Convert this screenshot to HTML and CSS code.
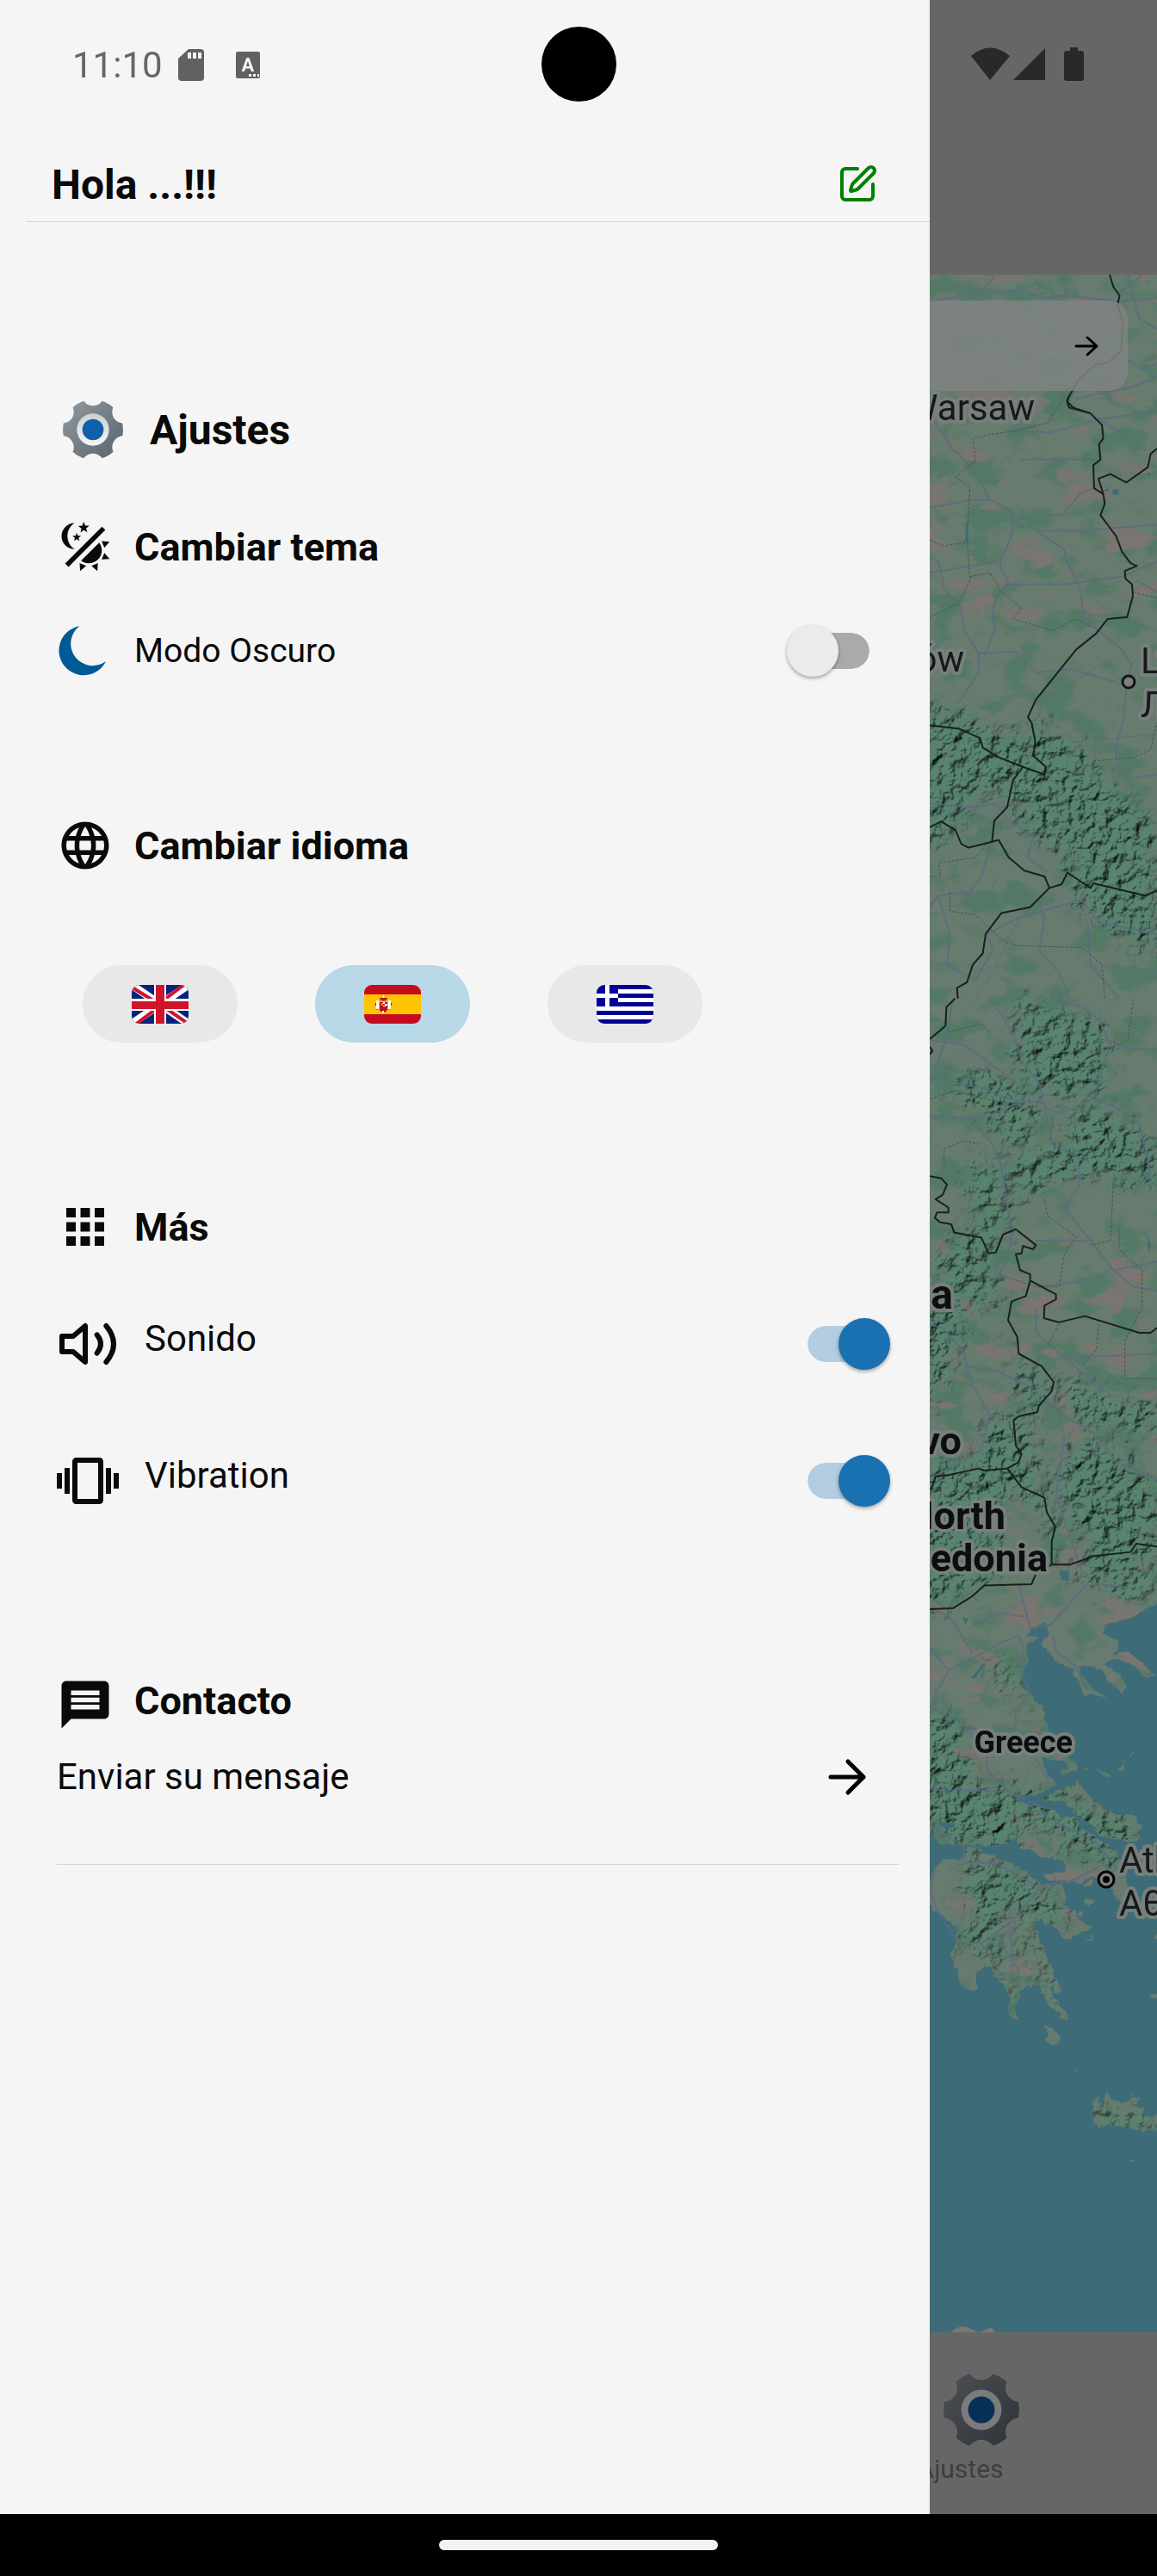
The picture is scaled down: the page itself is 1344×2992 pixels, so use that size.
FILE: index.html
```html
<!DOCTYPE html>
<html lang="es">
<head>
<meta charset="utf-8">
<meta name="viewport" content="width=device-width, initial-scale=1">
<title>Ajustes</title>
<link rel="stylesheet" href="styles.css">
</head>
<body>
<div class="device">
  <div class="screen">
    <div class="app">
      <header class="app-header"></header>
      <div class="map">
        <svg class="map-canvas" viewBox="0 319 1344 2390" preserveAspectRatio="xMaxYMin slice" aria-hidden="true">
          <defs>
            <filter id="forest" x="0" y="0" width="1" height="1" color-interpolation-filters="sRGB">
              <feTurbulence type="fractalNoise" baseFrequency=".024 .034" numOctaves="4" seed="7"/>
              <feColorMatrix values="0 0 0 0 .325  0 0 0 0 .475  0 0 0 0 .400  7 0 0 0 -3.6"/>
              <feComposite in2="SourceAlpha" operator="in"/>
            </filter>
            <filter id="plains" x="0" y="0" width="1" height="1" color-interpolation-filters="sRGB">
              <feTurbulence type="fractalNoise" baseFrequency=".018 .036" numOctaves="4" seed="23"/>
              <feColorMatrix values="0 0 0 0 .482  0 0 0 0 .459  0 0 0 0 .443  0 10 0 0 -6"/>
              <feComposite in2="SourceAlpha" operator="in"/>
            </filter>
            <filter id="relief" x="-.1" y="-.1" width="1.2" height="1.2" color-interpolation-filters="sRGB">
              <feGaussianBlur in="SourceGraphic" stdDeviation="9" result="soft"/>
              <feTurbulence type="fractalNoise" baseFrequency=".07" numOctaves="4" seed="4" result="noise"/>
              <feDisplacementMap in="soft" in2="noise" scale="50" xChannelSelector="R" yChannelSelector="G" result="area"/>
              <feColorMatrix in="noise" values="0 0 0 0 0 0 0 0 0 0 0 0 0 0 0 1 0 0 0 0" result="height"/>
              <feDiffuseLighting in="height" surfaceScale="6" diffuseConstant="1.25" lighting-color="#fff" result="light">
                <feDistantLight azimuth="225" elevation="55"/>
              </feDiffuseLighting>
              <feComposite in="area" in2="light" operator="arithmetic" k1="1" k2="0" k3="0" k4="0"/>
            </filter>
            <filter id="rough" x="-.1" y="-.1" width="1.2" height="1.2" color-interpolation-filters="sRGB">
              <feTurbulence type="fractalNoise" baseFrequency=".12" numOctaves="2" seed="2" result="n"/>
              <feDisplacementMap in="SourceGraphic" in2="n" scale="9" xChannelSelector="R" yChannelSelector="G"/>
            </filter>
            <path id="land" d="M0-3700H830V-91L740-50 640-29 640-5 685 10 690 30 665 50 720 40 760 65 812 100 800 112 765 95 735 75 700 65 670 55 640 75 690 100 718 135 700 150 665 125 630 95 600 78 545 80 600 140 648 163 600 155 560 148 545 115 520 85 470 65 430 30 425 15 450-10 430-35 385-20 372 0 410 5 365 25 372 60 350 100 355 130 385 155 420 190 445 245 460 290 510 315 540 330 545 350 490 362 480 355 520 345 500 325 420 318 430 345 445 365 470 385 440 400 400 415 345 415 330 425 380 440 470 455 480 475 540 475 545 495 600 520 640 540 680 560 700 600 720 640 715 680 700 700 680 680 650 640 600 625 560 640 520 640 440 635 430 620 500 615 510 595 470 580 420 575 380 555 345 555 330 530 270 545 200 545 60 540 30 505 0 500Z
              M0 640 30 635 50 600 80 585 140 580 155 555 190 550 240 575 300 590 370 615 420 650 495 650 505 680 500 705 535 715 545 735 590 755 580 770 540 775 520 795 490 785 480 765 430 745 395 735 400 765 430 820 450 860 485 920 470 930 440 910 455 930 490 970 513 997 490 995 460 970 430 945 415 910 370 912 345 925 340 945 325 960 335 997 305 988 300 975 310 950 300 920 270 895 245 885 250 865 215 860 190 880 198 920 180 928 135 905 130 880 105 845 105 820 130 800 125 760 90 735 40 710 0 690Z
              M425 420 470 405 550 380 575 410 620 440 680 465 750 468 765 500 760 535 700 530 620 520 600 495 540 465 500 430 425 428Z
              M600 1215 612 1195 618 1215 640 1215 648 1178 657 1210 720 1212 740 1193 762 1205 740 1225 775 1230 780 1250 830 1250 830 1288 740 1285 680 1275 610 1272 598 1262Z
              M440 1015 460 1025 485 1040 475 1065 455 1065 437 1048Z M570 685 602 685 585 706Z M565 650 598 630 598 640 580 656Z M545 722 565 718 555 732Z M565 790 602 782 590 792Z M725 1363 747 1368 740 1375Z M532 1128 545 1132 540 1138Z M615 345 658 362 635 366Z M680 348 708 324 700 345Z M565 345 585 345 575 352Z M728 308 738 304 732 314Z M798 935 830 930 830 948 800 946Z M810 790 830 755 830 795Z"/>
            <clipPath id="land-clip"><use href="#land" transform="translate(1070 1900) scale(.3333 .4464)"/></clipPath>
          </defs>
          <rect class="sea" y="319" width="1344" height="2390"/>
          <g filter="url(#rough)"><use class="land" href="#land" transform="translate(1070 1900) scale(.3333 .4464)"/></g>
          <g clip-path="url(#land-clip)">
            <rect x="1080" y="319" width="264" height="2100" filter="url(#forest)"/>
            <rect x="1080" y="319" width="264" height="400" filter="url(#plains)"/>
            <rect x="1080" y="1440" width="264" height="980" filter="url(#plains)"/>
            <g filter="url(#relief)" class="hills">
              <g transform="translate(1070 460) scale(.3333 .4464)">
                <path d="M0 820 150 830 350 900 400 840 560 920 620 990 822 1110V1440L700 1420 540 1310 520 1200 340 1110 290 1030 200 1040 60 1170 0 1180Z"/>
              </g>
              <g transform="translate(1070 1160) scale(.3333 .485)">
                <path d="M340 0 640 60 650 200 500 250 350 190 330 80ZM120 170 330 200 400 260 380 340 240 340 280 300 120 230ZM520 290 600 250 770 320 780 370 830 330V440L470 420 320 510 300 380 480 360ZM150 400 270 390 290 520 310 550 250 600 150 550 60 620 80 720 0 740V1000L120 870 160 700 280 760 300 860 460 920 560 910 640 960 830 960V1040L560 1010 470 930 400 990 240 1000 200 1100 0 1120V1480L170 1410 300 1380 240 1250 330 1160 460 1290 460 1350 540 1360 620 1300 500 1260 480 1140 560 1040 700 1100 830 1180V1330L620 1400 820 1360V1440L700 1430 500 1370Z"/>
              </g>
              <g transform="translate(1070 1900) scale(.3333 .4464)">
                <path d="M0 200 110 200 190 390 400 400 760 490 700 600 540 560 330 460 360 560 60 540 0 440ZM210 50 360 120 340 150 250 110ZM360 170 430 240 360 200ZM500 390 620 470 750 500 700 530 600 470ZM130 580 250 580 420 660 570 760 400 730 360 760 470 900 500 990 380 850 330 780 350 680 260 760 330 990 210 800 110 830 200 720ZM600 1220 830 1250V1290L610 1270Z"/>
              </g>
            </g>
          </g>
          <g class="roads">
            <g transform="translate(880 0) scale(.3333)">
              <path d="M822 955C820 1000 770 1000 778 1035L795 1080M600 1050 780 1020 920 1010 1000 1040 1075 1030 1260 1050 1400 1038M1062 955 1075 1030M1250 1030 1340 960M1290 950 1330 1110 1400 1150M1290 1255 1340 1290 1400 1260M1110 1390 1200 1370 1300 1350 1400 1310"/>
            </g>
            <g transform="translate(1070 460) scale(.3333 .4464)">
              <path d="M30 60C100 100 80 130 130 150L200 210 240 270 310 295 320 320 370 320 380 340 500 400 505 430 550 490 570 580 700 660 735 700 718 740 705 840 680 910 685 980 720 995 822 985M320 320C320 400 260 420 280 450L305 485C240 540 250 560 250 580L260 600 220 680M30 420 60 430 80 500 140 550 150 610 200 670 330 665 400 720 520 710 680 745M200 670 200 720 130 800M340 165 620 165M320 90 450 95 620 60 822 40M620 60 780 140M240 270 180 270 30 290M400 350 560 350 822 335M440 310 490 310 560 250 600 240M30 460 270 430M300 490 500 490 700 470 822 430M750 480 822 510M30 1060 180 1070 260 1060 300 1100 390 1150 370 1200 440 1240M250 1140 210 1250 170 1290 60 1300 30 1330M60 1300 100 1400 90 1480 190 1520 250 1440 230 1400 330 1360 560 1310 620 1370 822 1400M410 1310 430 1360 410 1440 480 1500 520 1568M580 1370 590 1480 690 1568"/>
              <path class="thin" d="M30 150 110 230 180 210M130 800 30 770M390 800 520 750 640 690M440 860 600 790M520 900 680 890 822 880M30 1470 90 1480M100 830 110 900 70 960 40 1040M270 1250 240 1290 130 1300M480 1010 470 1100 400 1150M340 1360 250 1500 190 1568M620 1480 822 1500"/>
            </g>
            <g transform="translate(1070 1160) scale(.3333 .485)">
              <path d="M240 0C300 60 320 70 350 150L410 200 430 260 480 275 600 240 640 150 660 110 620 50 560 20 450 0M600 240 680 260 760 300 790 380 800 440M660 100 720 120 822 122M110 0 90 90 40 190 30 200M30 100 150 110 330 200M40 190 220 215 300 240 430 250M30 280 200 290 340 250M180 290 250 350 280 400 300 500 320 560M430 260 460 350 550 380 550 450 500 500 590 580 670 650 822 630M400 580 600 580M320 560 290 640 240 690M270 660 400 690 530 680 620 660M670 650 740 690 822 700M30 780 80 790 150 850 170 910 240 1000 210 1080 30 1150M150 880 260 890 380 930 500 1000 600 1040 680 1110 822 1150M500 1050 470 1190 560 1370 600 1400 720 1410M400 740 400 800 500 860 640 940M500 860 822 850M30 1460 100 1480 180 1568M340 1400 380 1510 450 1500 580 1400M180 1500 270 1470 360 1480"/>
            </g>
            <g transform="translate(1070 1900) scale(.3333 .4464)">
              <path d="M30 30 95 90 50 150 40 190 150 230 230 310 230 350 330 420 480 490 600 530 690 610M95 90 200 50 270 20 340 0M340 0 360 40 340 70 380 150 330 190 330 240 270 250 150 240M30 400 300 405 440 450M400 320 440 370M460 0 470 40 540 80 580 140M30 490 150 550 150 590 260 590 400 650 520 640 620 600M50 610 30 660 60 720 130 800 210 800 320 740 420 650M210 800 280 880M270 790 340 870 340 920M310 750 320 840"/>
            </g>
          </g>
          <g class="provinces">
            <g transform="translate(1070 460) scale(.3333 .4464)">
              <path d="M500 0 440 70 330 90 240 100 180 110 190 170 120 210 170 240 160 370 170 480 130 540 30 575M30 375 80 390 160 380M170 470 240 460 280 510 350 550 320 580 460 610 540 580 590 600M600 950 740 940 800 920 822 850M740 510 822 525M30 1250 70 1250 60 1215 190 1200 240 1160M100 1290 100 1340 190 1350 290 1420 340 1430 560 1435 630 1480 640 1568"/>
            </g>
            <g transform="translate(1070 1160) scale(.3333 .485)">
              <path d="M95 80 210 60 240 80M30 240 120 220 250 245 340 250M80 400 80 360 150 340 210 350M740 0 720 100 580 140M430 480 440 520 540 570 500 610 480 690 400 690M670 440 660 580 590 590M690 550 690 600 770 650 770 740 710 820 710 910 822 910M620 780 610 840 560 880M440 830 480 780"/>
            </g>
          </g>
          <g class="water">
            <g transform="translate(1070 460) scale(.3333 .4464)"><path d="M665 245 685 242 688 258 670 256ZM635 245 652 240 650 250ZM200 1050 225 1042 222 1052ZM785 203 800 198 797 208ZM160 1100 166 1130 160 1130ZM155 330 163 330 165 380 155 380Z"/></g>
            <g transform="translate(1070 1160) scale(.3333 .485)"><path d="M480 1370 515 1370 515 1395 490 1392ZM595 1082 622 1095 605 1100ZM752 1200 770 1205 765 1215ZM110 550 132 562 115 568ZM725 1262 752 1280 740 1280ZM790 565 800 590 792 610ZM145 1480 165 1485 155 1500Z"/></g>
            <g transform="translate(1070 1900) scale(.3333 .4464)"><path d="M175 110 220 70 222 78 185 112ZM60 485 115 488 118 500 80 500ZM78 385 105 410 85 412Z"/></g>
          </g>
          <g class="borders">
            <g transform="translate(880 0) scale(.3333)"><path d="M1225 950 1240 1000 1262 1030 1255 1060 1272 1120 1268 1220 1225 1262 1180 1270 1120 1320 1078 1395 1085 1420 1160 1440"/></g>
            <g transform="translate(1070 460) scale(.3333 .4464)">
              <path d="M515 0 510 15 530 30 590 45 630 75 635 110 620 125 625 165 600 180 603 240 635 255 640 280 625 310 660 345 680 365 700 405 730 435 752 442 710 455 712 475 735 490 738 520 718 575 650 580 610 618 540 660 400 790 372 836 385 850 398 900 390 935 435 965 430 985 355 965 270 940 215 915 205 890 130 865 30 857M635 255 618 215 660 203 715 225 790 185 800 150 822 137M355 965 320 1000 300 1070 255 1105 247 1160 165 1175 140 1165 120 1130 70 1107 30 1122M247 1160 270 1155 305 1200 360 1235 430 1250 447 1280 490 1270 510 1240 590 1280 600 1268 780 1300 822 1287M447 1280 380 1330 280 1345 225 1400 215 1450 180 1480 160 1525 125 1540 128 1568"/>
            </g>
            <g transform="translate(1070 1160) scale(.3333 .485)">
              <path d="M118 0 88 20 85 65 30 97M30 115 40 125 30 133M30 425 70 430 90 445 75 470 50 480 95 500 95 512 55 512 48 525 65 535 105 540 115 560 210 572 235 610 260 608 285 565 330 552 400 590 390 600 355 592 350 610 330 612 345 650 380 660 380 675 470 708 470 720 430 735 428 765 480 775 570 760 760 800 800 800 822 788M380 675 365 712 315 725 303 770 335 810 340 850 420 880 462 918 455 940 410 975 405 990 340 1000 322 1010 330 1070 350 1090 340 1110 300 1125 220 1130 200 1125 100 1140 50 1145 35 1175M300 1125 350 1170 430 1195 438 1230 468 1265 455 1300 455 1355 520 1355 600 1335 730 1325 750 1305 822 1312M30 1462 110 1460 180 1430 220 1405 385 1402 398 1380M455 1355 395 1380"/>
            </g>
          </g>
          <path class="coast-tip" d="M1105 2709Q1115 2698 1128 2705L1135 2709ZM1137 2709 1152 2703 1156 2709Z"/>
          <circle class="city" cx="1311" cy="792" r="7"/>
          <circle class="capital" cx="1285" cy="2183" r="9"/>
          <circle class="capital-dot" cx="1285" cy="2183" r="4"/>
          <g class="city-labels">
            <text x="1202" y="488" text-anchor="end">Warsaw</text>
            <text x="1120" y="780" text-anchor="end">Kraków</text>
            <text x="1325" y="782">Lviv</text>
            <text x="1325" y="833">Львів</text>
            <text x="1300" y="2175">Athens</text>
            <text x="1300" y="2225">Αθήνα</text>
          </g>
          <g class="country-labels">
            <text class="label-large" x="1107" y="1520" text-anchor="end">Serbia</text>
            <text x="1117" y="1689" text-anchor="end">Kosovo</text>
            <text x="1168" y="1776" text-anchor="end">North</text>
            <text x="1217" y="1825" text-anchor="end">Macedonia</text>
            <text class="label-small" x="1246" y="2036" text-anchor="end">Greece</text>
          </g>
        </svg>
        <div class="search">
          <button class="search-go" type="button" aria-label="Buscar">
            <svg width="36" height="36" viewBox="0 0 36 36"><path class="arrow-line" d="M6 18H30M19 8 30 18 19 28"/></svg>
          </button>
        </div>
      </div>
      <nav class="tabs">
        <a class="tab" href="#ajustes">
          <svg width="140" height="90" viewBox="-70 -45 140 90" aria-hidden="true">
            <g transform="translate(24) scale(.418)">
              <circle r="105" fill="url(#gear-dim)" mask="url(#gear-teeth)"/>
              <circle r="56" fill="#7b7b7b"/><circle r="37" fill="#082f58"/>
            </g>
          </svg>
          <span>Ajustes</span>
        </a>
      </nav>
    </div>

    <aside class="drawer">
      <header class="drawer-header">
        <h1 class="title">Hola ...!!!</h1>
        <button class="icon-button" type="button" aria-label="Editar nombre">
          <svg class="edit" width="48" height="48" viewBox="0 0 24 24"><path d="M12 3H5a2 2 0 0 0-2 2v14a2 2 0 0 0 2 2h14a2 2 0 0 0 2-2v-7"/><path d="M18.375 2.625a1 1 0 0 1 3 3l-9.013 9.014a2 2 0 0 1-.853.505l-2.873.84a.5.5 0 0 1-.62-.62l.84-2.873a2 2 0 0 1 .506-.852z"/></svg>
        </button>
      </header>

      <div class="settings">
        <div class="row settings-heading">
          <svg width="84" height="84" viewBox="-126 -126 252 252" aria-hidden="true">
            <defs>
              <linearGradient id="gear" x1="0" y1="0" x2="1" y2="1"><stop offset="0" stop-color="#929a9f"/><stop offset="1" stop-color="#56636e"/></linearGradient>
              <linearGradient id="gear-dim" x1="0" y1="0" x2="1" y2="1"><stop offset="0" stop-color="#4c5053"/><stop offset="1" stop-color="#2e333a"/></linearGradient>
              <linearGradient id="ring" x1="0" y1="0" x2="0" y2="1"><stop offset="0" stop-color="#cfcfcf"/><stop offset="1" stop-color="#f6f6f6"/></linearGradient>
              <mask id="gear-teeth" maskUnits="userSpaceOnUse" x="-126" y="-126" width="252" height="252">
                <rect x="-126" y="-126" width="252" height="252" fill="#fff"/>
                <circle cy="-122" r="39"/><circle cy="122" r="39"/>
                <circle cx="106" cy="-61" r="39"/><circle cx="106" cy="61" r="39"/>
                <circle cx="-106" cy="-61" r="39"/><circle cx="-106" cy="61" r="39"/>
              </mask>
            </defs>
            <circle r="105" fill="url(#gear)" mask="url(#gear-teeth)"/>
            <circle r="56" fill="url(#ring)"/><circle r="37" fill="#0f60aa"/>
          </svg>
          <h2 class="title">Ajustes</h2>
        </div>

        <section class="theme">
          <h3 class="row subtitle">
            <svg class="icon" viewBox="0 0 24 24" aria-hidden="true"><path d="M7.5 2C5.71 3.15 4.5 5.18 4.5 7.5C4.5 9.82 5.71 11.85 7.53 13C4.46 13 2 10.54 2 7.5A5.5 5.5 0 0 1 7.5 2M19.07 3.5L20.5 4.93L4.93 20.5L3.5 19.07L19.07 3.5M12.89 5.93L11.41 5L9.97 6L10.39 4.3L9 3.24L10.75 3.12L11.33 1.47L12 3.1L13.73 3.13L12.38 4.26L12.89 5.93M9.59 9.54L8.43 8.81L7.31 9.59L7.65 8.27L6.56 7.44L7.92 7.35L8.37 6.06L8.88 7.33L10.24 7.36L9.19 8.23L9.59 9.54M19 13.5A5.5 5.5 0 0 1 13.5 19C12.28 19 11.15 18.6 10.24 17.93L17.93 10.24C18.6 11.15 19 12.28 19 13.5M14.6 20.08L17.37 18.93L17.13 22.28L14.6 20.08M18.93 17.38L20.08 14.61L22.28 17.15L18.93 17.38M20.08 12.42L18.94 9.64L22.28 9.88L20.08 12.42M9.63 18.93L12.4 20.08L9.87 22.27L9.63 18.93Z"/></svg>
            <span>Cambiar tema</span>
          </h3>
          <div class="row option option-theme">
            <svg class="icon moon" viewBox="78 849 198 198" aria-hidden="true"><path d="M157 862A86 86 0 1 0 249 984A76 76 0 0 1 157 862Z"/></svg>
            <label for="dark">Modo Oscuro</label>
            <input class="switch" id="dark" type="checkbox" role="switch">
          </div>
        </section>

        <section class="language">
          <h3 class="row subtitle">
            <svg class="icon" viewBox="0 0 24 24" aria-hidden="true"><path d="M11.99 2C6.47 2 2 6.48 2 12s4.47 10 9.99 10C17.52 22 22 17.52 22 12S17.52 2 11.99 2zm6.93 6h-2.95c-.32-1.25-.78-2.45-1.38-3.56 1.84.63 3.37 1.91 4.33 3.56zM12 4.04c.83 1.2 1.48 2.53 1.91 3.96h-3.82c.43-1.43 1.08-2.76 1.91-3.96zM4.26 14C4.1 13.36 4 12.69 4 12s.1-1.36.26-2h3.38c-.08.66-.14 1.32-.14 2 0 .68.06 1.34.14 2H4.26zm.82 2h2.95c.32 1.25.78 2.45 1.38 3.56-1.84-.63-3.37-1.9-4.33-3.56zm2.95-8H5.08c.96-1.66 2.49-2.93 4.33-3.56C8.81 5.55 8.35 6.75 8.03 8zM12 19.96c-.83-1.2-1.48-2.53-1.91-3.96h3.82c-.43 1.43-1.08 2.76-1.91 3.96zM14.34 14H9.66c-.09-.66-.16-1.32-.16-2 0-.68.07-1.35.16-2h4.68c.09.65.16 1.32.16 2 0 .68-.07 1.34-.16 2zm.25 5.56c.6-1.11 1.06-2.31 1.38-3.56h2.95c-.96 1.65-2.49 2.93-4.33 3.56zM16.36 14c.08-.66.14-1.32.14-2 0-.68-.06-1.34-.14-2h3.38c.16.64.26 1.31.26 2s-.1 1.36-.26 2h-3.38z"/></svg>
            <span>Cambiar idioma</span>
          </h3>
          <div class="flags">
            <button class="flag" type="button" aria-label="English">
              <svg width="66" height="45" viewBox="0 0 66 45">
                <path fill="#00247d" d="M0 0H66V45H0Z"/>
                <path stroke="#fff" stroke-width="9" d="M0 0 66 45M66 0 0 45"/>
                <path stroke="#cf142b" stroke-width="4" d="M-1 2 25 18M63-2 38 17M3 47 28 28M41 28 67 46"/>
                <path stroke="#fff" stroke-width="14" d="M33 0V45M0 23H66"/>
                <path fill="#cf142b" d="M28 0H38V45H28ZM0 19H66V28H0Z"/>
              </svg>
            </button>
            <button class="flag flag-selected" type="button" aria-label="Español" aria-pressed="true">
              <svg width="66" height="45" viewBox="0 0 66 45">
                <path fill="#c60b1e" d="M0 0H66V45H0Z"/><path fill="#ffc400" d="M0 11H66V34H0Z"/>
                <path fill="#c60b1e" d="M18 15H27V17H25V18H20V17H18ZM18 20H27V28Q27 31 22 32Q18 31 18 28ZM13 21H16V24H13ZM29 21H32V24H29Z"/>
                <path fill="#fff" d="M14 18H17V28H14ZM28 18H31V28H28ZM22 20H24V22H22ZM24 22H27V24H24ZM22 24H25V25H22ZM21 30H23V33H21ZM22 12H23V15H22Z"/>
                <path fill="#ad8b2b" d="M18 18H27V19H18ZM19 21H22V24H20ZM14 28H17V29H14ZM28 28H31V29H28Z"/>
              </svg>
            </button>
            <button class="flag" type="button" aria-label="Ελληνικά">
              <svg width="66" height="45" viewBox="0 0 66 45">
                <path fill="#000096" d="M0 0H66V45H0Z"/>
                <path fill="#fff" d="M25 5H66V10H25ZM25 15H66V20H25ZM0 25H66V30H0ZM0 35H66V40H0ZM0 10H25V15H0ZM10 0H15V25H10Z"/>
              </svg>
            </button>
          </div>
        </section>

        <section class="more">
          <h3 class="row subtitle">
            <svg class="icon" viewBox="0 0 24 24" aria-hidden="true"><path d="M4 8h4V4H4v4zm6 12h4v-4h-4v4zm-6 0h4v-4H4v4zm0-6h4v-4H4v4zm6 0h4v-4h-4v4zm6-10v4h4V4h-4zm-6 4h4V4h-4v4zm6 6h4v-4h-4v4zm0 6h4v-4h-4v4z"/></svg>
            <span>Más</span>
          </h3>
          <div class="row option option-large">
            <svg class="icon sound" viewBox="78 435 216 216" aria-hidden="true"><path d="M96 516H135L177 480V606L135 570H96ZM218 511Q244 543 218 575M250 480Q302 543 250 606"/></svg>
            <label for="sound">Sonido</label>
            <input class="switch" id="sound" type="checkbox" role="switch" checked>
          </div>
          <div class="row option option-large">
            <svg class="icon" viewBox="0 0 24 24" aria-hidden="true"><path d="M0 15h2V9H0v6zm3 2h2V7H3v10zm19-8v6h2V9h-2zm-3 8h2V7h-2v10zM16.5 3h-9C6.67 3 6 3.67 6 4.5v15c0 .83.67 1.5 1.5 1.5h9c.83 0 1.5-.67 1.5-1.5v-15c0-.83-.67-1.5-1.5-1.5zM16 19H8V5h8v14z"/></svg>
            <label for="vibration">Vibration</label>
            <input class="switch" id="vibration" type="checkbox" role="switch" checked>
          </div>
        </section>

        <section class="contact">
          <h3 class="row subtitle">
            <svg class="icon" viewBox="0 0 24 24" aria-hidden="true"><path d="M20 2H4c-1.1 0-2 .9-2 2v18l4-4h14c1.1 0 2-.9 2-2V4c0-1.1-.9-2-2-2zm-2 12H6v-2h12v2zm0-3H6V9h12v2zm0-3H6V6h12v2z"/></svg>
            <span>Contacto</span>
          </h3>
          <a class="message" href="#contacto">
            Enviar su mensaje
            <svg width="60" height="60" viewBox="0 0 60 60" aria-hidden="true"><path class="arrow-line arrow-large" d="M11 30H49M31 12 49 30 31 48"/></svg>
          </a>
        </section>
      </div>
    </aside>

    <div class="status">
      <time class="clock">11:10</time>
      <svg class="status-left" width="96" height="39" viewBox="208 56 96 39" aria-hidden="true">
        <path d="M220 57H234Q238 57 238 61V90Q238 94 234 94H212Q208 94 208 90V68Z"/><path fill="#f5f5f5" d="M219 61H223V68H219ZM225 61H229V68H225ZM231 61H235V68H231Z"/>
        <rect x="275" y="60" width="28" height="31" rx="2"/><text x="289" y="83" text-anchor="middle">A</text>
        <path fill="#f5f5f5" d="M290 86h3v3h-3ZM295 86h3v3h-3ZM300 86h2v3h-2Z"/>
      </svg>
      <svg class="status-right" width="132" height="40" viewBox="1129 55 132 40" aria-hidden="true">
        <path d="M1129 65Q1151 46 1174 65L1151 93ZM1178 93 1215 56V93ZM1244 55H1253V59H1257Q1260 59 1260 62V91Q1260 94 1257 94H1240Q1237 94 1237 91V62Q1237 59 1240 59H1244Z"/>
      </svg>
      <span class="camera"></span>
    </div>
  </div>
  <footer class="system-nav"><span class="home-pill"></span></footer>
</div>
</body>
</html>
```
FILE: styles.css
```css
* {
  box-sizing: border-box;
}

body {
  margin: 0;
  font-family: Roboto, "Liberation Sans", sans-serif;
  color: #0a0a0a;
}

h1,
h2,
h3 {
  margin: 0;
}

button {
  border: 0;
  padding: 0;
  background: none;
  cursor: pointer;
}

a {
  color: inherit;
  text-decoration: none;
}

svg {
  display: block;
  flex: none;
}

.device {
  display: flex;
  flex-direction: column;
  min-height: 100vh;
}

.screen {
  position: relative;
  display: flex;
  flex: 1;
  overflow: hidden;
}

/* Dimmed app behind the drawer */
.app {
  display: flex;
  flex: 1;
  flex-direction: column;
  background: #666;
}

.app-header {
  height: 319px;
}

.map {
  position: relative;
  flex: 1;
  overflow: hidden;
  background: #3e6b78;
}

.map-canvas {
  position: absolute;
  inset: 0;
  width: 100%;
  height: 100%;
}

.sea,
.water {
  fill: #3e6b78;
}

.land {
  fill: #677b6f;
}

.coast-tip {
  fill: #7c776f;
}

.hills {
  fill: #588470;
}

.roads path,
.provinces path,
.borders path {
  fill: none;
  vector-effect: non-scaling-stroke;
  stroke-linejoin: round;
}

.roads path {
  stroke: #5d6a80;
  stroke-width: 2;
  opacity: 0.8;
}

.roads .thin {
  stroke-width: 1;
}

.provinces path {
  stroke: #46534c;
  stroke-width: 1;
  stroke-dasharray: 3 2;
}

.borders path {
  stroke: #18201c;
  stroke-width: 2;
}

.city {
  fill: #7c7f7d;
  stroke: #151515;
  stroke-width: 3;
}

.capital {
  fill: #7c7f7d;
  stroke: #000;
  stroke-width: 3;
}

.capital-dot {
  fill: #000;
}

.city-labels,
.country-labels {
  fill: #17191b;
  font-size: 42px;
  stroke: #77807c;
  stroke-width: 8;
  stroke-linejoin: round;
  paint-order: stroke;
}

.country-labels {
  fill: #0c0e0f;
  font-size: 45px;
  font-weight: 700;
}

.label-large {
  font-size: 48px;
}

.label-small {
  font-size: 36px;
}

.search {
  position: relative;
  display: flex;
  align-items: center;
  justify-content: flex-end;
  height: 105px;
  margin: 30px 34px;
  padding-right: 30px;
  border-radius: 22px;
  background: rgb(127 131 129 / 86%);
}

.arrow-line {
  fill: none;
  stroke: #000;
  stroke-width: 3;
  stroke-linecap: round;
  stroke-linejoin: round;
}

.arrow-large {
  stroke-width: 5;
}

.tabs {
  display: flex;
  justify-content: flex-end;
  height: 211px;
  padding-right: 8px;
}

.tab {
  display: flex;
  width: 33%;
  flex-direction: column;
  align-items: center;
  gap: 6px;
  padding-top: 45px;
  color: #3f3f3f;
  font-size: 30px;
  line-height: 36px;
}

/* Drawer */
.drawer {
  position: absolute;
  inset: 0 auto 0 0;
  width: 1080px;
  max-width: 100%;
  padding-top: 171px;
  background: #f5f5f5;
}

.drawer-header {
  display: flex;
  align-items: center;
  justify-content: space-between;
  height: 87px;
  margin-left: 30px;
  padding: 0 60px 0 30px;
  border-bottom: 1px solid #d4d4d4;
}

.title {
  padding-top: 2px;
  font-size: 48px;
  font-weight: 700;
  line-height: 60px;
}

.edit {
  fill: none;
  stroke: #008000;
  stroke-width: 2;
  stroke-linecap: round;
  stroke-linejoin: round;
}

.settings {
  padding: 199px 36px 0 66px;
}

.row {
  display: flex;
  align-items: center;
  gap: 24px;
}

.subtitle {
  font-size: 45px;
  font-weight: 700;
  line-height: 54px;
}

.subtitle span {
  padding-top: 2px;
}

.icon {
  width: 66px;
  height: 66px;
  fill: #0a0a0a;
}

.theme {
  margin-top: 61px;
}

.language {
  margin-top: 157px;
}

.more {
  margin-top: 181px;
}

.contact {
  margin-top: 191px;
  padding-bottom: 71px;
  border-bottom: 1px solid #d4d4d4;
}

.contact .subtitle {
  align-items: flex-start;
}

.option label {
  flex: 1;
}

.option-theme {
  height: 72px;
  margin-top: 52px;
  padding-right: 28px;
  font-size: 39px;
}

.option-theme .moon {
  fill: #005a96;
}

.option-large {
  gap: 30px;
  margin-top: 67px;
  padding-right: 10px;
  font-size: 42px;
  line-height: 60px;
}

.option-large + .option-large {
  margin-top: 87px;
}

.option-large .icon {
  width: 72px;
  height: 72px;
}

.option-large label {
  align-self: flex-start;
}

.option-large .sound {
  fill: none;
  stroke: #0a0a0a;
  stroke-width: 18;
  stroke-linecap: round;
  stroke-linejoin: round;
}

.switch {
  display: flex;
  align-items: center;
  width: 102px;
  height: 60px;
  margin: 0;
  appearance: none;
  background: linear-gradient(#aaa, #aaa) center / 48px 42px no-repeat,
    radial-gradient(circle closest-side, #aaa 97%, transparent) 6px 50% / 42px 42px no-repeat,
    radial-gradient(circle closest-side, #aaa 97%, transparent) 54px 50% / 42px 42px no-repeat;
}

.switch::before {
  content: "";
  width: 60px;
  height: 60px;
  border-radius: 50%;
  background: #ebebeb;
  box-shadow: 0 2px 4px rgb(0 0 0 / 35%);
}

.switch:checked {
  justify-content: flex-end;
  background: linear-gradient(#b2cde1, #b2cde1) center / 48px 42px no-repeat,
    radial-gradient(circle closest-side, #b2cde1 97%, transparent) 6px 50% / 42px 42px no-repeat,
    radial-gradient(circle closest-side, #b2cde1 97%, transparent) 54px 50% / 42px 42px no-repeat;
}

.switch:checked::before {
  background: #1971b2;
}

.flags {
  display: flex;
  gap: 90px;
  margin: 106px 0 0 30px;
}

.flag {
  display: flex;
  align-items: center;
  justify-content: center;
  width: 180px;
  height: 90px;
  border-radius: 45px;
  background: #e8e8e8;
}

.flag svg {
  border-radius: 9px;
}

.flag-selected {
  background: #b8d7e7;
}

.message {
  display: flex;
  align-items: center;
  justify-content: space-between;
  margin-top: 21px;
  padding-right: 30px;
  font-size: 42px;
  line-height: 60px;
}

/* System bars */
.status {
  position: absolute;
  inset: 0 0 auto 0;
  display: flex;
  align-items: center;
  height: 150px;
  padding: 0 84px;
}

.clock {
  color: #666;
  font-size: 42px;
}

.status-left {
  margin-left: 18px;
  fill: #616161;
}

.status-left text {
  fill: #f5f5f5;
  font-size: 22px;
  font-weight: 700;
}

.status-right {
  margin-left: auto;
  fill: #292929;
}

.camera {
  position: absolute;
  top: 31px;
  left: calc(50% - 43px);
  width: 87px;
  height: 87px;
  border-radius: 50%;
  background: #000;
}

.system-nav {
  display: flex;
  align-items: center;
  justify-content: center;
  height: 72px;
  background: #000;
}

.home-pill {
  width: 324px;
  height: 12px;
  border-radius: 6px;
  background: #f2f2f2;
}
```
